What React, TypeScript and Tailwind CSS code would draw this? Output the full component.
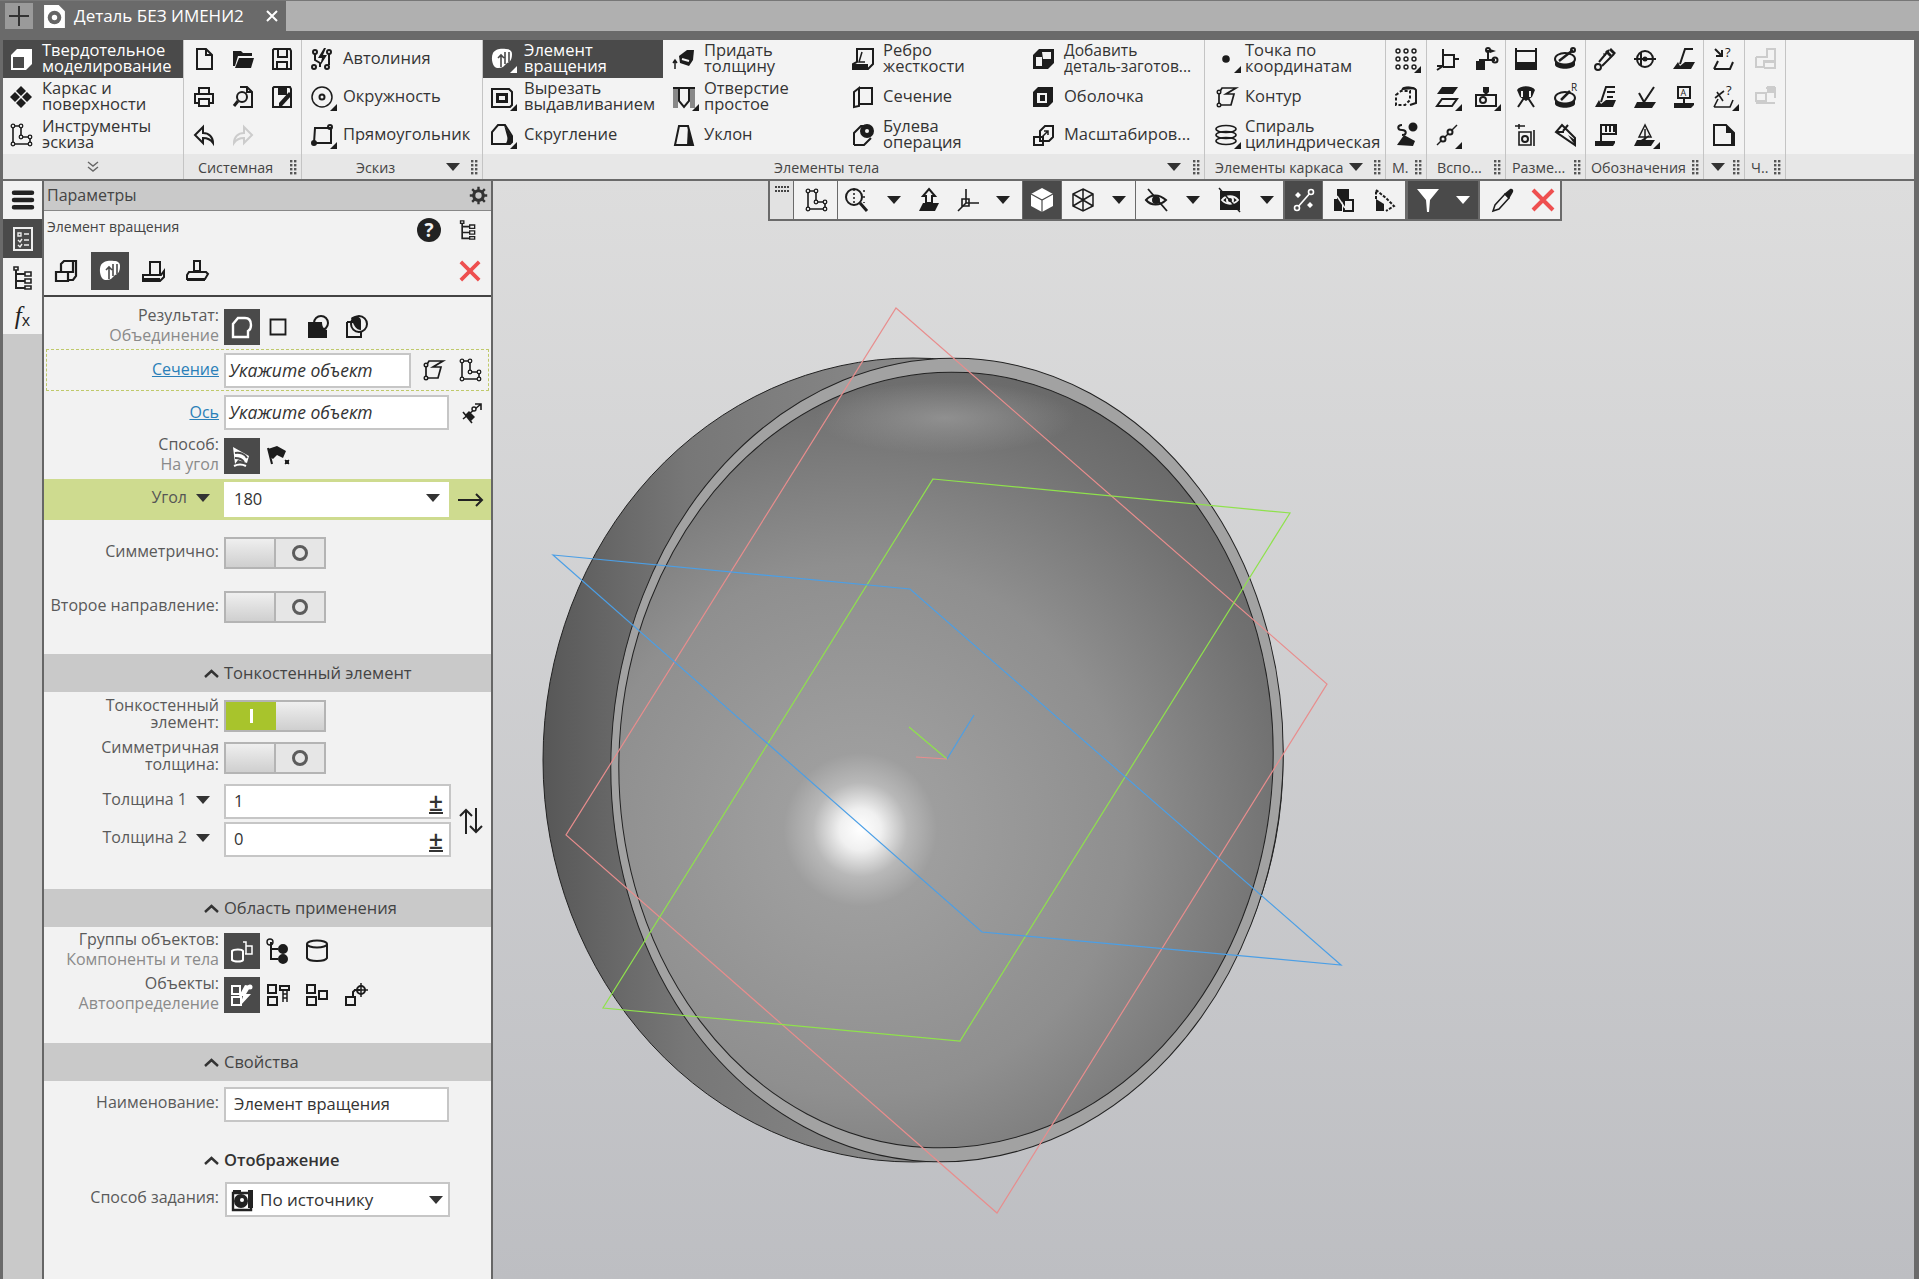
import { FC, ReactNode } from "react";

const Sv: FC<{ children: ReactNode; s?: number; more?: boolean; className?: string }> = ({ children, s = 24, more, className }) => (
  <svg viewBox="0 0 24 24" width={s} height={s} className={`shrink-0 overflow-visible ${className ?? ""}`}>
    <g fill="none" stroke="currentColor" strokeWidth="2">{children}</g>
    {more && <path d="M27 26v-7l-7 7z" fill="currentColor" />}
  </svg>
);

const F: FC<{ d: string; c?: string }> = ({ d, c = "currentColor" }) => <path d={d} fill={c} stroke="none" />;

const icons: Record<string, ReactNode> = {
  solid: (<><F d="M2 8l6-6h15v15l-6 6H2z" c="#fff" /><F d="M4 10h11v11H4z" c="#4a4a4a" /></>),
  lattice: (<><F d="M12 1l5 5-5 5-5-5z" /><F d="M18 7l5 5-5 5-5-5z" /><F d="M6 7l5 5-5 5-5-5z" /><F d="M12 13l5 5-5 5-5-5z" /></>),
  sketch: (<><path d="M4 3h8v11h9v7H4z" strokeWidth="1.6" />{[[4, 3], [12, 3], [12, 14], [21, 14], [21, 21], [4, 21]].map(([x, y]) => <circle key={`${x}-${y}`} cx={x} cy={y} r="1.8" fill="#f2f2f2" strokeWidth="1.3" />)}</>),
  doc: <path d="M5 2h9l6 6v14H5zM14 2v6h6" />,
  folder: (<><F d="M2 4h8l2 2h9v3H7L4 19H2z" /><F d="M8 11h15l-3 10H4z" /></>),
  save: (<><path d="M4 2h16l1 2v18H3V3z" /><path d="M8 2v8h9V2M7 22v-7h10v7" /></>),
  print: (<><path d="M7 9V3h10v6M7 18H3V9h18v9h-4" /><path d="M7 14h10v7H7z" /></>),
  preview: (<><path d="M9 2h7l5 5v15H9M16 2v5h5" /><circle cx="11" cy="12" r="5" /><path d="M7 16l-4 5" strokeWidth="3" /></>),
  saveas: (<><path d="M4 2h16l1 2v18H3V3z" /><F d="M8 2h9v8H8z" /><F d="M22 10l-10 11h-3v-3l10-11z" /></>),
  undo: (<><path d="M11 4L3 12l8 8v-5c5 0 8 2 10 5 0-6-4-10-10-10z" /></>),
  redo: <path d="M13 4l8 8-8 8v-5c-5 0-8 2-10 5 0-6 4-10 10-10z" stroke="#ccc" />,
  autoline: (<><path d="M5 7v6l5 3v4M19 7v11" /><circle cx="5" cy="5" r="2" /><circle cx="19" cy="5" r="2" /><circle cx="4" cy="20" r="2" /><circle cx="17" cy="20" r="2" /><F d="M14 1l-6 10h4l-2 8 7-11h-4l3-7z" /></>),
  circle: (<><circle cx="12" cy="12" r="10" strokeWidth="1.5" /><circle cx="12" cy="12" r="2.5" /></>),
  rect: (<><path d="M5 5h16v15H4z" /><circle cx="20" cy="4" r="2" /><circle cx="4" cy="20" r="2" /></>),
  revolve: (<><F d="M3 6c2-4 8-5 13-4 4 0 6 2 6 5 0 4-1 8-5 9l-4 4c-4 2-8 1-9-1-2-3-3-9-1-13z" /><path d="M11 8v12M8 11l3-3 3 3M15 5v12M19 5v10" stroke="#4a4a4a" strokeWidth="1.6" /></>),
  cut: (<><path d="M2 4h17l3 3v13l-2 2H2z" /><F d="M6 8h12v10H6z" /><F d="M9 11h6v4H9z" c="#f2f2f2" /></>),
  fillet: (<><path d="M2 21V9l6-7h7l7 11v6l-2 2z" /><F d="M14 2l8 12c0 3-1 6-3 8h-4c2-3 3-6 2-9z" /></>),
  thick: (<><path d="M3 22V13M1 16l2-3 2 3" strokeWidth="1.5" /><F d="M7 9l8-6h7l-1 10-4 6-9-3z" /><path d="M10 12l7 2" stroke="#f2f2f2" /></>),
  hole: (<><F d="M1 3h5v20H1z" c="#888" /><F d="M18 3h5v20h-5z" c="#888" /><path d="M1 3h22M7 3v13l5 6 5-6V3" /></>),
  draft: (<><path d="M7 3h9l5 19H3z" /><F d="M16 3l5 19h-6z" /></>),
  rib: (<><path d="M6 2h16v15l-5 5H2v-5l4-2z" /><F d="M2 17h15v5H2z" /><path d="M11 5l-3 10h6" strokeWidth="1.5" /></>),
  section: <path d="M3 7l5-4v18l-5 1zM8 3h13v16H8" />,
  bool: (<><path d="M3 22V10l7-7h5M3 22h10l7-7" /><circle cx="16" cy="8" r="6" fill="currentColor" /><circle cx="16" cy="8" r="2" fill="#f2f2f2" stroke="none" /></>),
  add: (<><F d="M2 8l6-6h15v14l-6 6H2z" /><F d="M11 5h9v7h-8z" c="#f2f2f2" /><F d="M5 10h6v9H5z" c="#f2f2f2" /></>),
  shell: (<><F d="M2 7l5-5h15v15l-5 5H2z" /><F d="M6 8h10v10H6z" c="#f2f2f2" /><F d="M9 10h5v6H9z" /></>),
  scale: (<><path d="M9 8l5-5h8v11l-4 4h-9zM3 14h9v8H3z" /><path d="M11 14l6-6m-4 0h4v4" strokeWidth="1.5" /></>),
  point: (<><circle cx="12" cy="12" r="2.8" fill="currentColor" /></>),
  contour: (<><path d="M5 8l3-5h14l-10 6h8l-3 11H7M5 8v11" strokeWidth="1.7" /><circle cx="5" cy="7" r="1.8" strokeWidth="1.4" fill="#f2f2f2" /><circle cx="5" cy="20" r="1.8" strokeWidth="1.4" fill="#f2f2f2" /></>),
  spiral: (<><ellipse cx="12" cy="6" rx="10" ry="3.5" strokeWidth="1.6" /><ellipse cx="12" cy="12" rx="10" ry="3.5" strokeWidth="1.6" /><ellipse cx="12" cy="18" rx="10" ry="3.5" strokeWidth="1.6" /></>),
  dots: (<>{[4, 12, 20].map((y) => [4, 12, 20].map((x) => <circle key={`${x}${y}`} cx={x} cy={y} r="2" strokeWidth="1.4" />))}</>),
  macro: (<><path d="M2 10l5-4h9v9l-5 5H2z" strokeDasharray="3 2" /><path d="M8 5c1-3 12-3 14 0v13l-6 2" /><F d="M8 3c3-2 12-2 14 1l-14 1z" /></>),
  mask: (<><circle cx="19" cy="4" r="3.5" fill="currentColor" /><path d="M8 2C3 2 3 7 8 7s5 5 0 5" /><F d="M3 22l7-10 11 6-2 5z" /></>),
  axes3: (<><path d="M8 2v17H2M8 8h11v12H8M8 19l-6 4M19 12h5" /></>),
  branch: (<><F d="M16 2l6 2-6 2z" /><path d="M14 3v9M5 13h16" /><circle cx="14" cy="3" r="2" /><circle cx="21" cy="13" r="2.5" /><F d="M2 14h9v9H2z" /></>),
  planes: (<><F d="M7 2h16l-5 7H2z" /><path d="M7 14h15l-5 7H2z" /></>),
  cam: (<><F d="M9 2h6v5l-3 3-3-3z" /><path d="M2 10h20v11H2z" /><circle cx="9" cy="15" r="3" /></>),
  line: (<><path d="M2 22L22 2" strokeWidth="1.5" /><circle cx="8" cy="16" r="2.5" fill="#f2f2f2" /><circle cx="15" cy="9" r="2.5" fill="#f2f2f2" /></>),
  dimlin: (<><path d="M2 1v22M22 1v22M2 4h20M2 16h20" /><F d="M2 15h20v8H2z" /></>),
  diam: (<><ellipse cx="12" cy="12" rx="10" ry="6" /><F d="M2 12c2 6 18 6 20 0v6c-2 5-18 5-20 0z" /><path d="M6 14L20 3" strokeWidth="2.5" /><circle cx="20" cy="3" r="2" /></>),
  angle: (<><F d="M3 5c3-5 15-5 18 0l-3 7-6 4-6-4z" /><path d="M4 22L12 10l8 12" stroke="currentColor" /><path d="M8 6v6M16 6v6" stroke="#f2f2f2" /></>),
  radius: (<><ellipse cx="12" cy="13" rx="10" ry="6" /><F d="M2 13c2 6 18 6 20 0v6c-2 5-18 5-20 0z" /><path d="M8 15L17 6" strokeWidth="2.5" /><text x="18" y="6" fontSize="10" fill="currentColor" stroke="none">R</text></>),
  tol: (<><path d="M5 1v5M1 3h10M5 9h12v13H5zM20 7v16" strokeWidth="1.6" /><circle cx="11" cy="16" r="3" /></>),
  skew: (<><path d="M9 2l13 13v7L3 9zM3 9h8M15 2l-5 6" /><F d="M15 12l7 5v5z" /></>),
  thread: (<><circle cx="4" cy="20" r="3" /><path d="M5 15L15 3M8 19L20 7" /><F d="M10 6l2 2-1 1-2-2zM13 3l5 5-2 2-5-5zM17 1l5 5-2 2-5-5z" /></>),
  ball: (<><circle cx="12" cy="12" r="8" /><path d="M1 12h22M8 5v14" /><circle cx="12" cy="12" r="1.5" fill="currentColor" /></>),
  rough: (<><path d="M8 17L13 2h8" /><F d="M6 15l2 4 5-4h10l-4 7H1z" /></>),
  leader: (<><path d="M7 17L12 2h9M13 7h8M13 12h6" /><F d="M5 15l2 4 5-4h10l-3 7H1z" /></>),
  check: (<><path d="M6 8l5 9 10-15" /><F d="M4 17h19l-4 6H1z" /></>),
  aflag: (<><path d="M6 2h12v11H6zM12 13v6" /><text x="8.5" y="11" fontSize="9" fill="currentColor" stroke="none">A</text><F d="M2 18h20v2l-3 3H2z" /></>),
  box: (<><path d="M7 2h15v9H7zM7 11v7" /><F d="M11 3h2v6h-2zM15 3h2v6h-2zM19 3h2v6h-2z" /><F d="M1 18h20v2l-2 3H1z" /></>),
  tri: (<><path d="M12 2L6 14h12zM12 6v14M8 18l8-5" strokeWidth="1.5" /><F d="M4 17h18l-4 6H1z" /></>),
  askarrow: (<><path d="M2 22h16l3-7M2 22l4-8" /><path d="M3 2l7 7M10 3v6H4" /><text x="13" y="10" fontSize="13" fill="currentColor" stroke="none">?</text></>),
  askangle: (<><path d="M2 22h16l3-7M2 22l4-8M5 7l6 9M3 13l9-7" strokeWidth="1.6" /><text x="14" y="10" fontSize="13" fill="currentColor" stroke="none">?</text></>),
  page: (<><path d="M2 2h12l8 8v12H2z" /><F d="M14 2l8 8-1 12h-2V10h-5z" /></>),
  gray1: (<><path d="M3 10h11V2h8v12H10M3 10v10h8v-5h11v6H11" stroke="#ccc" /></>),
  gray2: (<><path d="M3 8h10v8H3zM13 3h9v10" stroke="#ccc" /><path d="M3 18h19" stroke="#ccc" /><F d="M14 1h8v7h-8z" c="#ccc" /></>),
  menu: (<><path d="M2 4h20M2 12h20M2 20h20" strokeWidth="5" strokeLinecap="round" transform="translate(1.2 1.2) scale(0.9)" /></>),
  list: (<><path d="M3 1h18v22H3z" /><path d="M7 6h3v3H7zM13 7h5M7 13l2 2 2-3M13 13h5M7 18l2 2 2-3M13 18h5" strokeWidth="1.4" /></>),
  tree: (<><path d="M5 2v20h9M5 8h9M5 15h9" /><path d="M3 1h4v3H3zM14 6h6v4h-6zM14 13h6v4h-6zM14 20h6v3h-6z" fill="#f2f2f2" strokeWidth="1.6" /></>),
  gear: (<><circle cx="12" cy="12" r="6" strokeWidth="4" /><path d="M12 1v5M12 18v5M1 12h5M18 12h5M4 4l4 4M16 16l4 4M20 4l-4 4M8 16l-4 4" strokeWidth="3" /></>),
  help: (<><circle cx="12" cy="12" r="12" fill="currentColor" stroke="none" /><text x="12" y="19" fontSize="19" fontWeight="700" textAnchor="middle" fill="#f2f2f2" stroke="none" fontFamily="Open Sans">?</text></>),
  boxes: (<><path d="M2 13h12v9H2zM7 13V5l3-3h12v15l-3 4h-5M14 13h5V2" strokeWidth="2.2" /></>),
  boss: (<><path d="M9 3h10v13H9z" /><path d="M2 16h18l3-4v6l-4 4H2z" /><F d="M2 19h17v3H2z" /></>),
  boss2: (<><path d="M9 2h6v10H9z" /><path d="M4 13h17l2 2-3 5H2v-4z" /><F d="M2 19h18v3H2z" /></>),
  close: <path d="M2 2l20 20M22 2L2 22" stroke="#ee4f4f" strokeWidth="4" />,
  union: <path d="M3 22V9l5-6h7c4 0 6 3 6 7 0 3-1 5-3 6v6z" strokeWidth="2.4" />,
  square: <path d="M3 3h18v18H3z" strokeWidth="2.2" />,
  sub: (<><F d="M2 7h14c0 5 2 7 5 8v8H2z" /><circle cx="15" cy="8" r="7" /></>),
  inter: (<><path d="M2 7h14M2 7v15h14v-6" /><circle cx="14" cy="9" r="8" /><F d="M6 3c3-3 10-2 10 3v9c-5 0-7-4-10-12z" transform="translate(2 1)" /></>),
  axis: (<><path d="M3 18L21 3m-6 0h6v6" strokeWidth="1.6" /><path d="M3 11l9 11" strokeWidth="1.6" /><F d="M5 14l4-4 6 6-4 4z" /><circle cx="14" cy="8" r="2" strokeWidth="1.4" fill="#f2f2f2" /></>),
  rotate: (<><F d="M3 3l16 9-2 7-9-3-3 4z" c="#fff" /><path d="M5 9c5-1 10 1 12 5M5 14c4 0 7 1 9 4" stroke="#4a4a4a" /><path d="M4 22c4-2 8-2 12 0" stroke="#fff" /></>),
  flag: (<><F d="M2 5l9-3 9 5-3 7-6-3-4 4-3-2z" /><path d="M2 4l4 16" /><path d="M20 18h4M22 16v4M20 16l4 4M24 16l-4 4" strokeWidth="1.4" transform="translate(-1 0)" /></>),
  groups: (<><path d="M2 12c2-2 10-2 11 0v9c-1 2-9 2-11 0z" stroke="#fff" /><path d="M13 3h3v4h6v8h-7M16 7v8" stroke="#fff" strokeWidth="1.5" /></>),
  compTree: (<><path d="M5 3v17h7M5 10h7" /><circle cx="4" cy="3" r="3" strokeWidth="1.4" /><circle cx="17" cy="10" r="4" fill="currentColor" /><circle cx="17" cy="20" r="4" fill="currentColor" /></>),
  barrel: (<><ellipse cx="12" cy="5" rx="10" ry="3.5" /><path d="M2 5v14c2 4 18 4 20 0V5" /></>),
  auto: (<><path d="M2 3h8v8H2zM2 14h9v8H2z" stroke="#fff" /><F d="M15 2l6 1-5 8h5L10 23l3-10H9z" c="#fff" /><circle cx="20" cy="4" r="2.5" fill="#fff" stroke="none" /></>),
  objBolt: (<><path d="M2 2h8v8H2zM2 14h9v8H2z" /><path d="M14 3h9v4h-9z" strokeWidth="2" /><path d="M17 7v12M21 7v12M17 11h4M17 15h4" strokeWidth="1.5" /></>),
  obj2: (<><path d="M2 2h8v8H2zM2 14h9v8H2zM14 8h8v8h-8z" /></>),
  target: (<><path d="M2 14h9v8H2zM9 14V9l2-2h5" /><circle cx="17" cy="7" r="4" /><path d="M17 0v14M10 7h14" strokeWidth="1.5" /></>),
  srcIcon: (<><path d="M2 5h18v17H2z" strokeWidth="2.4" /><F d="M2 2h8v3H2zM17 2h5v18h-5z" /><circle cx="10" cy="13" r="6" fill="currentColor" /><circle cx="11" cy="12" r="2" fill="#fff" stroke="none" /></>),
  zoomBox: (<><circle cx="9" cy="9" r="8" /><path d="M15 15l7 8" strokeWidth="3" /><path d="M9 1v16M19 2v2M19 8v2M19 14v1" strokeDasharray="2 2" strokeWidth="1.5" /></>),
  orient: (<><path d="M12 1l6 7h-3v7H9V8H6z" /><F d="M6 15h16l-4 8H2z" /></>),
  triad: (<><path d="M11 1v14M11 15l-8 8M11 15h13" strokeWidth="1.6" /><path d="M7 11h7v7H7z" strokeWidth="1.6" /></>),
  cubeW: (<><F d="M12 0l11 6v12l-11 6-11-6V6z" c="#fff" /><path d="M1 6l11 6 11-6M12 12v12" stroke="#4a4a4a" strokeWidth="1.2" /></>),
  wireCube: (<><path d="M12 1l10 5v12l-10 5-10-5V6zM2 6l20 12M22 6L2 18M12 1v22" strokeWidth="1.5" /></>),
  hideEye: (<><path d="M1 12c5-6 13-6 20 0-6 6-15 6-20 0z" /><circle cx="11" cy="12" r="3" fill="currentColor" /><path d="M3 1l19 22" strokeWidth="1.8" /></>),
  hideBox: (<><F d="M2 3h20v19H2z" /><path d="M4 12c4-5 12-5 16 0-4 5-12 5-16 0z" stroke="#f2f2f2" /><circle cx="12" cy="12" r="3" stroke="#f2f2f2" /><path d="M1 0l21 24" strokeWidth="1.5" /></>),
  nodes: (<><path d="M5 20L19 4" stroke="#fff" strokeWidth="1.6" /><circle cx="5" cy="20" r="2.5" fill="#4a4a4a" stroke="#fff" strokeWidth="1.6" /><circle cx="19" cy="4" r="2.5" fill="#4a4a4a" stroke="#fff" strokeWidth="1.6" /><F d="M6 4l3 3-3 3-3-3zM18 14l3 3-3 3-3-3z" c="#fff" /></>),
  blocks: (<><F d="M6 1h12v12H6z" /><F d="M3 11h8v12H3z" /><path d="M13 12h9v11h-9zM8 2l5 14" stroke="currentColor" /><path d="M6 8l8 12" stroke="#f2f2f2" strokeWidth="1.5" /></>),
  layers: (<><F d="M4 11l8 5v7H4z" /><path d="M4 11V2l10 8 8 8-8 5" strokeDasharray="3 1.5" /></>),
  funnel: <F d="M1 1h22l-9 11-1 12h-2l-1-12z" c="#fff" />,
  dropper: (<><path d="M2 23l2-6L14 6l4 4L8 21z" strokeWidth="1.5" /><F d="M13 6l6-5c2-1 4 1 3 3l-4 7z" /></>),
};

const Icon: FC<{ n: string; s?: number; more?: boolean; className?: string }> = ({ n, s, more, className }) => (
  <Sv s={s} more={more} className={className}>{icons[n]}</Sv>
);

const Caret: FC<{ className?: string }> = ({ className }) => (
  <svg width="14" height="8" viewBox="0 0 14 8" className={`shrink-0 ${className ?? ""}`}>
    <path d="M0 0h14L7 8z" fill="currentColor" />
  </svg>
);

const Grip = () => (
  <svg width="7" height="16" viewBox="0 0 7 16" className="shrink-0 text-[#555]">
    {[1, 5, 9, 13].map((y) => (
      <g key={y} fill="currentColor">
        <rect x="0" y={y} width="2.4" height="2.4" />
        <rect x="4" y={y} width="2.4" height="2.4" />
      </g>
    ))}
  </svg>
);

const Cmd: FC<{ icon: string; text: ReactNode; more?: boolean; active?: boolean; className?: string }> = ({ icon, text, more, active, className }) => (
  <div className={`flex h-[38px] items-center ${active ? "bg-[#4a4a4a] text-white" : "text-[#333]"} ${className ?? ""}`}>
    <span className={active ? "text-white" : "text-[#1c1c1c]"}><Icon n={icon} more={more} /></span>
    <span className="whitespace-nowrap pb-[3px] text-[16.5px] leading-[16px]">{text}</span>
  </div>
);

const Foot: FC<{ children: ReactNode; className?: string }> = ({ children, className }) => (
  <div className={`flex h-[25px] items-center bg-[#e7e7e7] text-[14.3px] text-[#444] ${className ?? ""}`}>{children}</div>
);

const FootText: FC<{ children: ReactNode; className?: string }> = ({ children, className }) => (
  <span className={`flex-1 whitespace-nowrap pt-[2px] ${className ?? ""}`}>{children}</span>
);

const Group: FC<{ className: string; foot: ReactNode; children: ReactNode }> = ({ className, foot, children }) => (
  <div className={`flex shrink-0 flex-col border-r border-[#c4c4c4] ${className}`}>
    <div className="h-[114px] bg-[#f3f3f3]">{children}</div>
    {foot}
  </div>
);

const Cell: FC<{ n?: string; more?: boolean }> = ({ n, more }) => (
  <div className="flex h-[38px] items-center justify-center text-[#1c1c1c]">{n && <Icon n={n} more={more} />}</div>
);

const Ribbon = () => (
  <div className="flex h-[139px] pl-[3px] pr-[5px]">
    <Group className="w-[181px]" foot={
      <Foot className="justify-center text-[#666]">
        <svg width="12" height="11" viewBox="0 0 12 11"><path d="M1 1l5 4 5-4M1 6l5 4 5-4" fill="none" stroke="currentColor" strokeWidth="1.4" /></svg>
      </Foot>
    }>
      <Cmd active icon="solid" className="gap-[9px] pl-[6px]" text={<>Твердотельное<br />моделирование</>} />
      <Cmd icon="lattice" className="gap-[9px] pl-[6px]" text={<>Каркас и<br />поверхности</>} />
      <Cmd icon="sketch" className="gap-[9px] pl-[6px]" text={<>Инструменты<br />эскиза</>} />
    </Group>
    <Group className="w-[118px]" foot={<Foot className="pl-[14px] pr-[4px]"><FootText>Системная</FootText><Grip /></Foot>}>
      <div className="grid grid-cols-3">
        {["doc", "folder", "save", "print", "preview", "saveas", "undo", "redo"].map((n) => <Cell key={n} n={n} />)}
      </div>
    </Group>
    <Group className="w-[181px]" foot={<Foot className="pl-[54px] pr-[4px]"><FootText>Эскиз</FootText><Caret className="mr-[11px] text-[#333]" /><Grip /></Foot>}>
      <Cmd icon="autoline" className="gap-[9px] pl-[8px]" text="Автолиния" />
      <Cmd icon="circle" more className="gap-[9px] pl-[8px]" text="Окружность" />
      <Cmd icon="rect" more className="gap-[9px] pl-[8px]" text="Прямоугольник" />
    </Group>
    <Group className="w-[722px]" foot={<Foot className="pl-[291px] pr-[4px]"><FootText>Элементы тела</FootText><Caret className="mr-[12px] text-[#333]" /><Grip /></Foot>}>
      <div className="flex">
        <div className="w-[180px]">
          <Cmd active more icon="revolve" className="gap-[10px] pl-[7px]" text={<>Элемент<br />вращения</>} />
          <Cmd more icon="cut" className="gap-[10px] pl-[7px]" text={<>Вырезать<br />выдавливанием</>} />
          <Cmd more icon="fillet" className="gap-[10px] pl-[7px]" text="Скругление" />
        </div>
        <div className="w-[177px]">
          <Cmd icon="thick" className="gap-[8px] pl-[9px]" text={<>Придать<br />толщину</>} />
          <Cmd more icon="hole" className="gap-[8px] pl-[9px]" text={<>Отверстие<br />простое</>} />
          <Cmd icon="draft" className="gap-[8px] pl-[9px]" text="Уклон" />
        </div>
        <div className="w-[183px]">
          <Cmd icon="rib" className="gap-[8px] pl-[11px]" text={<>Ребро<br />жесткости</>} />
          <Cmd icon="section" className="gap-[8px] pl-[11px]" text="Сечение" />
          <Cmd icon="bool" className="gap-[8px] pl-[11px]" text={<>Булева<br />операция</>} />
        </div>
        <div className="w-[181px]">
          <Cmd icon="add" className="gap-[9px] pl-[8px]" text={<span className="text-[15.6px]">Добавить<br />деталь-заготов...</span>} />
          <Cmd icon="shell" className="gap-[9px] pl-[8px]" text="Оболочка" />
          <Cmd icon="scale" className="gap-[9px] pl-[8px]" text="Масштабиров..." />
        </div>
      </div>
    </Group>
    <Group className="w-[181px]" foot={<Foot className="pl-[10px] pr-[4px]"><FootText>Элементы каркаса</FootText><Caret className="mr-[11px] text-[#333]" /><Grip /></Foot>}>
      <Cmd more icon="point" className="gap-[7px] pl-[9px]" text={<>Точка по<br />координатам</>} />
      <Cmd icon="contour" className="gap-[7px] pl-[9px]" text="Контур" />
      <Cmd more icon="spiral" className="gap-[7px] pl-[9px]" text={<>Спираль<br />цилиндрическая</>} />
    </Group>
    <Group className="w-[41px]" foot={<Foot className="pl-[6px] pr-[4px]"><FootText>М.</FootText><Grip /></Foot>}>
      <Cell n="dots" more /><Cell n="macro" /><Cell n="mask" />
    </Group>
    <Group className="w-[79px]" foot={<Foot className="pl-[10px] pr-[4px]"><FootText>Вспо...</FootText><Grip /></Foot>}>
      <div className="grid grid-cols-2">
        <Cell n="axes3" /><Cell n="branch" /><Cell n="planes" more /><Cell n="cam" more /><Cell n="line" more />
      </div>
    </Group>
    <Group className="w-[80px]" foot={<Foot className="pl-[6px] pr-[4px]"><FootText>Разме...</FootText><Grip /></Foot>}>
      <div className="grid grid-cols-2">
        <Cell n="dimlin" /><Cell n="diam" /><Cell n="angle" /><Cell n="radius" /><Cell n="tol" /><Cell n="skew" />
      </div>
    </Group>
    <Group className="w-[118px]" foot={<Foot className="pl-[5px] pr-[4px]"><FootText>Обозначения</FootText><Grip /></Foot>}>
      <div className="grid grid-cols-3">
        <Cell n="thread" /><Cell n="ball" /><Cell n="rough" /><Cell n="leader" /><Cell n="check" /><Cell n="aflag" /><Cell n="box" /><Cell n="tri" more />
      </div>
    </Group>
    <Group className="w-[41px]" foot={<Foot className="pl-[7px] pr-[4px]"><Caret className="flex-none text-[#333]" /><span className="flex-1" /><Grip /></Foot>}>
      <Cell n="askarrow" /><Cell n="askangle" more /><Cell n="page" />
    </Group>
    <Group className="w-[41px]" foot={<Foot className="pl-[6px] pr-[4px]"><FootText>Ч..</FootText><Grip /></Foot>}>
      <Cell n="gray1" /><Cell n="gray2" />
    </Group>
    <div className="flex flex-1 flex-col">
      <div className="h-[114px] bg-[#f3f3f3]" />
      <Foot>{null}</Foot>
    </div>
  </div>
);

const Row: FC<{ label?: ReactNode; sub?: string; className?: string; labelClass?: string; children?: ReactNode }> = ({ label, sub, className, labelClass, children }) => (
  <div className={`flex items-center ${className ?? ""}`}>
    <div className={`w-[175px] shrink-0 whitespace-nowrap pb-[4px] text-right text-[16px] leading-[17px] text-[#5a5a5a] ${labelClass ?? ""}`}>
      {label}
      {sub && <div className="mt-[3px] text-[#8a8a8a]">{sub}</div>}
    </div>
    <div className="ml-[5px] flex flex-1 items-center">{children}</div>
  </div>
);

const Box: FC<{ children: ReactNode; className?: string }> = ({ children, className }) => (
  <div className={`flex h-[35px] items-center border-2 border-[#c6c6c6] bg-white text-[16.5px] text-[#333] ${className ?? ""}`}>{children}</div>
);

const Dark: FC<{ n: string }> = ({ n }) => (
  <div className="flex h-[36px] w-[36px] items-center justify-center bg-[#4a4a4a] text-white"><Icon n={n} /></div>
);

const Toggle: FC<{ on?: boolean }> = ({ on }) => (
  <div className="flex h-[32px] w-[102px] border-2 border-[#b4b4b4] bg-[#e6e6e6]">
    {on ? (
      <>
        <div className="flex w-[50px] items-center justify-center bg-[#a8c42c]"><div className="h-[14px] w-[3px] bg-white" /></div>
        <div className="flex-1 bg-gradient-to-b from-[#efefef] to-[#cfcfcf]" />
      </>
    ) : (
      <>
        <div className="w-[50px] border-r-2 border-[#b4b4b4] bg-gradient-to-b from-[#efefef] to-[#cfcfcf]" />
        <div className="flex flex-1 items-center justify-center">
          <div className="h-[16px] w-[16px] rounded-full border-[3px] border-[#5c5c5c]" />
        </div>
      </>
    )}
  </div>
);

const Chevron = () => (
  <svg width="15" height="9" viewBox="0 0 15 9" className="shrink-0 text-[#333]">
    <path d="M1 8l6.5-6L14 8" fill="none" stroke="currentColor" strokeWidth="2.4" />
  </svg>
);

const Section: FC<{ title: string; className?: string }> = ({ title, className }) => (
  <div className={`flex h-[38px] items-center bg-[#c9c9c9] pr-1 text-[16.5px] text-[#444] ${className ?? ""}`}>
    <div className="flex w-[175px] justify-end"><Chevron /></div>
    <span className="ml-[5px]">{title}</span>
  </div>
);

const Tool: FC<{ n: string; className?: string }> = ({ n, className }) => (
  <div className={`flex items-center justify-center text-[#1c1c1c] ${className ?? ""}`}><Icon n={n} /></div>
);

const Pm = () => (
  <span className="ml-auto mr-[6px] border-b-2 border-[#333] text-[25px] font-semibold leading-[22px]">±</span>
);

const Panel = () => (
  <div className="flex w-[451px] shrink-0 flex-col border-x-2 border-[#666] bg-[#f2f2f2]">
    <div className="flex h-[29px] items-center justify-between bg-[#c9c9c9] pl-[3px] pr-[3px] text-[16px] text-[#444]">
      <span className="pb-[2px]">Параметры</span>
      <Icon n="gear" s={19} className="text-[#333]" />
    </div>
    <div className="border-b-2 border-t border-b-[#444] border-t-[#888]">
      <div className="flex h-[38px] items-center pl-[3px] text-[14px] text-[#444]">
        <span className="flex-1 pb-[7px]">Элемент вращения</span>
        <Icon n="help" s={24} className="mr-[17px] text-[#222]" />
        <Icon n="tree" s={20} className="mr-[13px] text-[#222]" />
      </div>
      <div className="flex h-[46px] items-start pl-[3px] pt-[3px] text-[#1c1c1c]">
        <Tool n="boxes" className="h-[38px] w-[38px]" />
        <div className="ml-[6px] flex h-[38px] w-[38px] items-center justify-center bg-[#4a4a4a] text-white"><Icon n="revolve" /></div>
        <Tool n="boss" className="ml-[5px] h-[38px] w-[38px]" />
        <Tool n="boss2" className="ml-[6px] h-[38px] w-[38px]" />
        <div className="ml-auto mr-[10px] flex h-[38px] items-center"><Icon n="close" s={22} /></div>
      </div>
    </div>

    <Row label="Результат:" sub="Объединение" className="mt-[12px] h-[36px]">
      <Dark n="union" />
      <div className="flex items-center text-[#1c1c1c]">
        <Icon n="square" s={20} className="ml-[8px]" />
        <Icon n="sub" s={24} className="ml-[18px]" />
        <Icon n="inter" s={24} className="ml-[15px]" />
      </div>
    </Row>
    <Row className="mx-[2px] mt-[4px] h-[42px] rounded-[1px] border border-dashed border-[#bfc96a]" labelClass="!w-[172px] !pb-[2px]"
      label={<a className="text-[#2a7fb8] underline">Сечение</a>}>
      <Box className="w-[187px] pl-[3px] text-[17.5px] italic">Укажите объект</Box>
      <span className="text-[#1c1c1c]"><Icon n="contour" className="ml-[10px]" /></span>
      <span className="text-[#1c1c1c]"><Icon n="sketch" className="ml-[13px]" /></span>
    </Row>
    <Row className="mt-[4px] h-[35px]" labelClass="!pb-0" label={<a className="text-[#2a7fb8] underline">Ось</a>}>
      <Box className="w-[225px] pl-[3px] text-[17.5px] italic">Укажите объект</Box>
      <span className="text-[#1c1c1c]"><Icon n="axis" className="ml-[11px]" /></span>
    </Row>
    <Row label="Способ:" sub="На угол" className="mt-[8px] h-[36px]">
      <Dark n="rotate" />
      <span className="text-[#1c1c1c]"><Icon n="flag" className="ml-[6px]" /></span>
    </Row>
    <Row className="mt-[5px] h-[41px] bg-[#cedb8f]" label={<span className="inline-flex items-center gap-[9px] pr-[9px] text-[#555]">Угол <Caret className="text-[#333]" /></span>}>
      <Box className="relative w-[225px] border-white pl-[8px]">
        180
        <Caret className="absolute right-[7px] top-[10px] text-[#333]" />
      </Box>
      <svg width="26" height="14" viewBox="0 0 26 14" className="ml-[9px] text-[#222]"><path d="M0 7h24M18 1l6 6-6 6" fill="none" stroke="currentColor" strokeWidth="2" /></svg>
    </Row>

    <Row label="Симметрично:" className="mt-[17px] h-[31px]" labelClass="!pb-[2px]"><Toggle /></Row>
    <Row label="Второе направление:" className="mt-[23px] h-[31px]" labelClass="!pb-[2px]"><Toggle /></Row>

    <Section title="Тонкостенный элемент" className="mt-[32px]" />
    <Row label={<>Тонкостенный<br />элемент:</>} className="mt-[8px] h-[32px]"><Toggle on /></Row>
    <Row label={<>Симметричная<br />толщина:</>} className="mt-[10px] h-[32px]"><Toggle /></Row>
    <div className="mt-[10px] flex items-center">
      <div className="w-[412px]">
        <Row className="h-[35px]" label={<span className="inline-flex items-center gap-[9px] pr-[9px]">Толщина 1 <Caret className="text-[#333]" /></span>}>
          <Box className="w-[227px] pl-[8px]">1<Pm /></Box>
        </Row>
        <Row className="mt-[3px] h-[35px]" label={<span className="inline-flex items-center gap-[9px] pr-[9px]">Толщина 2 <Caret className="text-[#333]" /></span>}>
          <Box className="w-[227px] pl-[8px]">0<Pm /></Box>
        </Row>
      </div>
      <svg width="24" height="26" viewBox="0 0 24 26" className="ml-[3px] text-[#222]"><path d="M7 26V2M1 8l6-6 6 6M17 0v24M11 18l6 6 6-6" fill="none" stroke="currentColor" strokeWidth="2" /></svg>
    </div>

    <Section title="Область применения" className="mt-[32px]" />
    <Row label="Группы объектов:" sub="Компоненты и тела" className="mt-[6px] h-[36px]">
      <Dark n="groups" />
      <span className="text-[#1c1c1c]"><Icon n="compTree" className="ml-[6px]" /></span>
      <span className="text-[#1c1c1c]"><Icon n="barrel" className="ml-[15px]" /></span>
    </Row>
    <Row label="Объекты:" sub="Автоопределение" className="mt-[8px] h-[36px]">
      <Dark n="auto" />
      <span className="text-[#1c1c1c]"><Icon n="objBolt" className="ml-[6px]" /></span>
      <span className="text-[#1c1c1c]"><Icon n="obj2" className="ml-[15px]" /></span>
      <span className="text-[#1c1c1c]"><Icon n="target" className="ml-[15px]" /></span>
    </Row>

    <Section title="Свойства" className="mt-[30px]" />
    <Row label="Наименование:" className="mt-[6px] h-[35px]">
      <Box className="w-[225px] pl-[8px]">Элемент вращения</Box>
    </Row>
    <div className="mt-[26px] flex h-[24px] items-center text-[16.5px] font-semibold text-[#333]">
      <div className="flex w-[175px] justify-end"><Chevron /></div>
      <span className="ml-[5px]">Отображение</span>
    </div>
    <Row label="Способ задания:" className="mt-[10px] h-[35px]">
      <Box className="ml-[1px] w-[225px] border-[#b4b4b4] pl-[4px] text-[17px]">
        <Icon n="srcIcon" className="mr-[5px] text-[#222]" />
        По источнику
        <Caret className="ml-auto mr-[5px] text-[#333]" />
      </Box>
    </Row>
  </div>
);

const Toolbar = () => (
  <div className="absolute left-[275px] top-0 flex h-[40px] gap-px border-x-2 border-b-2 border-[#6a6a6a] bg-[#6a6a6a]">
    <div className="flex w-[23px] justify-center bg-[#e2e2e2] pt-[5px]">
      <svg width="14" height="6" viewBox="0 0 14 6" className="text-[#444]">
        {[0, 3, 6, 9, 12].map((x) => (
          <g key={x} fill="currentColor"><rect x={x} y="0" width="2" height="2" /><rect x={x} y="4" width="2" height="2" /></g>
        ))}
      </svg>
    </div>
    <div className="flex w-[43px] items-center justify-center bg-[#f2f2f2]"><Tool n="sketch" /></div>
    <div className="flex w-[184px] bg-[#f2f2f2] text-[#222]">
      <Tool n="zoomBox" className="w-[38px]" />
      <div className="flex w-[35px] items-center justify-center"><Caret /></div>
      <Tool n="orient" className="w-[36px]" />
      <Tool n="triad" className="w-[39px]" />
      <div className="flex w-[34px] items-center justify-center"><Caret /></div>
    </div>
    <div className="flex w-[38px] items-center justify-center bg-[#4a4a4a]"><Icon n="cubeW" /></div>
    <div className="flex w-[73px] bg-[#f2f2f2] text-[#222]">
      <Tool n="wireCube" className="w-[42px]" />
      <div className="flex w-[29px] items-center justify-center"><Caret /></div>
    </div>
    <div className="flex w-[147px] bg-[#f2f2f2] text-[#222]">
      <Tool n="hideEye" className="w-[42px]" />
      <div className="flex w-[30px] items-center justify-center"><Caret /></div>
      <Tool n="hideBox" className="w-[44px]" />
      <div className="flex w-[29px] items-center justify-center"><Caret /></div>
    </div>
    <div className="ml-px flex w-[37px] items-center justify-center bg-[#4a4a4a]"><Icon n="nodes" /></div>
    <div className="flex w-[82px] bg-[#f2f2f2]">
      <Tool n="blocks" className="w-[40px]" />
      <Tool n="layers" className="w-[42px]" />
    </div>
    <div className="ml-[2px] flex w-[70px] bg-[#4a4a4a] text-white">
      <div className="flex w-[40px] items-center justify-center"><Icon n="funnel" /></div>
      <div className="flex w-[30px] items-center justify-center"><Caret /></div>
    </div>
    <div className="ml-px flex w-[80px] bg-[#f2f2f2]">
      <Tool n="dropper" className="w-[46px]" />
      <Tool n="close" className="w-[34px]" />
    </div>
  </div>
);

const Model = () => (
  <svg viewBox="493 181 1421 1098" className="block h-full w-full">
    <defs>
      <linearGradient id="back" x1="543" x2="900" y1="760" y2="760" gradientUnits="userSpaceOnUse">
        <stop offset="0" stopColor="#575757" />
        <stop offset="0.18" stopColor="#666" />
        <stop offset="0.4" stopColor="#777" />
        <stop offset="1" stopColor="#888" />
      </linearGradient>
      <radialGradient id="front" cx="864" cy="834" r="590" gradientUnits="userSpaceOnUse">
        <stop offset="0" stopColor="#ffffff" />
        <stop offset="0.035" stopColor="#f0f0f0" />
        <stop offset="0.08" stopColor="#b8b8b8" />
        <stop offset="0.13" stopColor="#9e9e9e" />
        <stop offset="0.45" stopColor="#8f8f8f" />
        <stop offset="0.72" stopColor="#717171" />
        <stop offset="1" stopColor="#5b5b5b" />
      </radialGradient>
      <radialGradient id="band" cx="0.5" cy="0.5" r="0.5">
        <stop offset="0" stopColor="#979797" stopOpacity="0.8" />
        <stop offset="1" stopColor="#979797" stopOpacity="0" />
      </radialGradient>
    </defs>
    <ellipse cx="913" cy="760" rx="370" ry="402" fill="url(#back)" stroke="#222" strokeWidth="1" />
    <ellipse cx="947" cy="760" rx="336" ry="402" transform="rotate(3 947 760)" fill="#a2a2a2" stroke="#222" strokeWidth="1" />
    <ellipse cx="946" cy="760" rx="327" ry="388" transform="rotate(3 946 760)" fill="url(#front)" stroke="#222" strokeWidth="1" />
    <ellipse cx="945" cy="418" rx="130" ry="36" fill="url(#band)" />
    <polygon points="896,308 1327,684 997,1213 566,835" fill="none" stroke="#e88d8d" strokeWidth="1.2" />
    <polygon points="933,479 1290,513 960,1041 603,1008" fill="none" stroke="#8fe24c" strokeWidth="1.2" />
    <polygon points="553,555 910,589 1341,965 982,932" fill="none" stroke="#4b9fe6" strokeWidth="1.2" />
    <path d="M947 759L909 727" stroke="#8fe24c" strokeWidth="1.2" />
    <path d="M947 759L974 715" stroke="#4b9fe6" strokeWidth="1.2" />
    <path d="M947 759L916 757" stroke="#e88d8d" strokeWidth="1.2" />
  </svg>
);

export default function App() {
  return (
    <div className="flex h-[1279px] w-[1919px] flex-col overflow-hidden bg-[#6a6a6a] font-['Open_Sans',sans-serif]">
      <div className="flex h-[31px] shrink-0 border-t border-[#777] bg-[#b0b0b0]">
        <div className="flex w-[36px] items-center justify-center bg-[#6a6a6a] pl-[2px]">
          <div className="flex h-[26px] w-[28px] items-center justify-center bg-[#9a9a9a] text-[#333]">
            <svg width="20" height="20" viewBox="0 0 20 20"><path d="M10 0v20M0 10h20" stroke="currentColor" strokeWidth="2" /></svg>
          </div>
        </div>
        <div className="flex w-[250px] items-center bg-[#6a6a6a] pl-[6px] text-[17px] text-white">
          <svg width="25" height="25" viewBox="0 0 24 24" className="mr-[7px]">
            <path d="M2 1h14l6 6v16H2z" fill="#fff" />
            <circle cx="12" cy="13" r="6.5" fill="#666" />
            <circle cx="12" cy="13" r="2.6" fill="#fff" />
          </svg>
          <span>Деталь БЕЗ ИМЕНИ2</span>
          <svg width="12" height="12" viewBox="0 0 12 12" className="ml-[22px]"><path d="M1 1l10 10M11 1L1 11" stroke="#fff" strokeWidth="2" /></svg>
        </div>
        <div className="flex-1" />
      </div>
      <div className="h-[9px] shrink-0" />
      <Ribbon />
      <div className="flex min-h-0 flex-1 pl-[3px] pr-[5px] pt-[2px]">
        <div className="w-[39px] shrink-0 bg-[#c9c9c9]">
          <div className="flex h-[38px] items-center justify-center bg-[#f2f2f2] text-[#222]"><Icon n="menu" /></div>
          <div className="flex h-[39px] items-center justify-center bg-[#4a4a4a] text-[#eee]"><Icon n="list" /></div>
          <div className="flex h-[40px] items-center justify-center bg-[#f2f2f2] text-[#222]"><Icon n="tree" /></div>
          <div className="flex h-[36px] items-center justify-center bg-[#f2f2f2] font-['Liberation_Serif',serif] text-[25px] italic text-[#222]">f<span className="mt-[8px] font-['Open_Sans',sans-serif] text-[16px] not-italic leading-none">x</span></div>
        </div>
        <Panel />
        <div className="relative min-w-0 flex-1 bg-gradient-to-b from-[#dddddd] to-[#bdbec2]">
          <Model />
          <Toolbar />
        </div>
      </div>
    </div>
  );
}
